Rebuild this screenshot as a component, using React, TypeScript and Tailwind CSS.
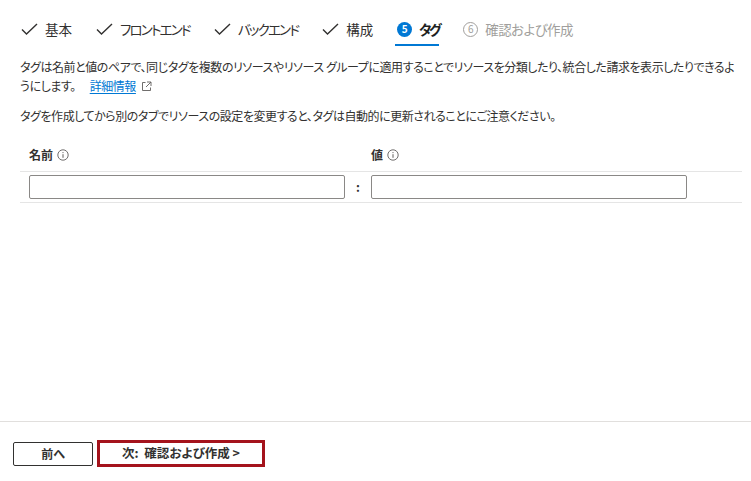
import React from 'react';

const font = { fontFamily: '"Noto Sans CJK JP", "Noto Sans", sans-serif' };

function Check() {
  return (
    <svg width="17" height="13" viewBox="0 0 17 13" fill="none">
      <path d="M1 6.5 L5.5 11 L16 1" stroke="#323130" strokeWidth="1.4" />
    </svg>
  );
}

function InfoIcon() {
  return (
    <svg width="12" height="12" viewBox="0 0 12 12" fill="none">
      <circle cx="6" cy="6" r="5.2" stroke="#605e5c" strokeWidth="0.9" />
      <path d="M6 5.2 V8.8" stroke="#605e5c" strokeWidth="1" />
      <circle cx="6" cy="3.6" r="0.6" fill="#605e5c" />
    </svg>
  );
}

function ExternalIcon() {
  return (
    <svg width="11" height="11" viewBox="0 0 11 11" fill="none">
      <path d="M4.5 1.5 H1.5 V9.5 H9.5 V6.5" stroke="#605e5c" strokeWidth="0.9" />
      <path d="M6 1 H10 V5 M10 1 L5 6" stroke="#605e5c" strokeWidth="0.9" />
    </svg>
  );
}

type Tab = { label: string; state: 'done' | 'active' | 'todo'; num?: number; track?: string };

const tabs: Tab[] = [
  { label: '基本', state: 'done', track: '' },
  { label: 'フロントエンド', state: 'done', track: 'tracking-[-1.8px]' },
  { label: 'バックエンド', state: 'done', track: 'tracking-[-1.8px]' },
  { label: '構成', state: 'done', track: '' },
  { label: 'タグ', state: 'active', num: 5, track: 'tracking-[-2.5px]' },
  { label: '確認および作成', state: 'todo', num: 6, track: 'tracking-[-0.6px]' },
];

export default function App() {
  return (
    <div
      className="w-[751px] h-[481px] bg-white text-[#323130] flex flex-col [font-feature-settings:'palt']"
      style={font}
    >
      {/* wizard tabs */}
      <div className="flex pl-[21px] pt-[19px] gap-[24px]">
        {tabs.map((t) => (
          <div key={t.label} className="flex flex-col">
            <div className="flex items-center h-5 gap-[7px] text-[13.5px] leading-5">
              {t.state === 'done' && <Check />}
              {t.state === 'active' && (
                <span className="w-[15px] h-[15px] rounded-full bg-[#0078d4] text-white text-[10px] font-bold flex items-center justify-center">
                  {t.num}
                </span>
              )}
              {t.state === 'todo' && (
                <span className="w-[15px] h-[15px] rounded-full border border-[#a19f9d] text-[#a19f9d] text-[10px] flex items-center justify-center">
                  {t.num}
                </span>
              )}
              <span
                className={
                  t.track +
                  ' ' +
                  (t.state === 'active'
                    ? 'font-bold text-[#201f1e]'
                    : t.state === 'todo'
                    ? 'text-[#a19f9d]'
                    : 'text-[#323130]')
                }
              >
                {t.label}
              </span>
            </div>
            <div
              className={
                t.state === 'active'
                  ? 'mt-[5px] h-[2px] bg-[#0078d4] -ml-[2px]'
                  : 'mt-[5px] h-[2px]'
              }
            />
          </div>
        ))}
      </div>

      {/* description */}
      <div className="px-5 pt-[11px] text-[12px] leading-[19px] tracking-[-0.45px] text-[#323130]">
        <p className="whitespace-nowrap">
          タグは名前と値のペアで、同じタグを複数のリソースやリソース グループに適用することでリソースを分類したり、統合した請求を表示したりできるよ
          <br />
          うにします。
          <a className="ml-[14px] text-[#0078d4] underline underline-offset-2">詳細情報</a>
          <span className="inline-block ml-[5px] align-[-1px]">
            <ExternalIcon />
          </span>
        </p>
        <p className="mt-[11px]">
          タグを作成してから別のタブでリソースの設定を変更すると、タグは自動的に更新されることにご注意ください。
        </p>
      </div>

      {/* tag table */}
      <div className="mx-5 mt-[13px] w-[722px]">
        <div className="flex h-[34px] items-center border-b border-[#e5e5e5] text-[12px] font-bold">
          <div className="w-[342px] pl-[9px] flex items-center gap-[4px]">
            名前
            <InfoIcon />
          </div>
          <div className="pl-[9px] flex items-center gap-[4px]">
            値
            <InfoIcon />
          </div>
        </div>
        <div className="flex items-center h-[31px] border-b border-[#e5e5e5]">
          <div className="pl-[9px]">
            <input className="block w-[316px] h-6 border border-[#8a8886] rounded-[2px] outline-none" />
          </div>
          <div className="w-[26px] text-center text-[12px] font-bold">:</div>
          <input className="block w-[316px] h-6 border border-[#8a8886] rounded-[2px] outline-none" />
        </div>
      </div>

      <div className="flex-1" />

      {/* footer */}
      <div className="border-t border-[#e1dfdd] h-[60px] flex items-start pt-[18px] pl-[13px] gap-[4px] text-[12px] font-bold">
        <button className="mt-[2px] w-[80px] h-6 border border-[#323130] rounded-[2px] bg-white text-[#323130]">
          前へ
        </button>
        <div className="border-[3.5px] border-[#a4131c] w-[168px] h-[27px] flex items-center justify-center bg-white text-[#323130] text-[12.5px]">
          次:&nbsp; 確認および作成 &gt;
        </div>
      </div>
    </div>
  );
}
